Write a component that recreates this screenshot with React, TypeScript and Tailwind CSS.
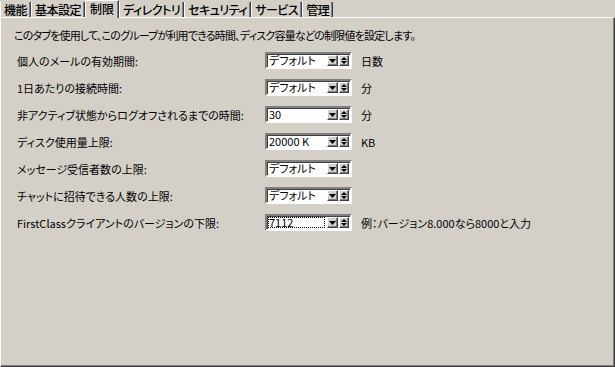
import React from 'react';

const TABS = [
  { label: '機能' },
  { label: '基本設定' },
  { label: '制限', active: true },
  { label: 'ディレクトリ' },
  { label: 'セキュリティ' },
  { label: 'サービス' },
  { label: '管理' },
];

const ROWS = [
  { label: '個人のメールの有効期間:', value: 'デフォルト', unit: '日数' },
  { label: '1日あたりの接続時間:', value: 'デフォルト', unit: '分' },
  { label: '非アクティブ状態からログオフされるまでの時間:', value: '30', unit: '分' },
  { label: 'ディスク使用量上限:', value: '20000 K', unit: 'KB' },
  { label: 'メッセージ受信者数の上限:', value: 'デフォルト', unit: '' },
  { label: 'チャットに招待できる人数の上限:', value: 'デフォルト', unit: '' },
  { label: 'FirstClassクライアントのバージョンの下限:', value: '7112', unit: '例：バージョン8.000なら8000と入力', focused: true },
];

function Combo({ value, focused }: { value: string; focused?: boolean }) {
  return (
    <div className="flex h-[17px] w-[87px] border-2 border-t-[#808080] border-l-[#808080] border-b-white border-r-white bg-white shadow-[inset_1px_1px_#404040]">
      <div className="flex-1 flex p-[1px] pr-[2px] min-w-0">
        <span
          className={
            'flex-1 flex items-center whitespace-nowrap leading-[13px] pl-[1px] ' +
            (focused ? 'outline outline-1 outline-dotted outline-black -outline-offset-1' : '')
          }
        >
          {value}
        </span>
      </div>
      {/* dropdown button */}
      <div className="my-[1px] w-[11px] bg-[#d4d0c8] border-t border-l border-white border-r border-b border-r-[#404040] border-b-[#404040] shadow-[inset_-1px_-1px_#808080] flex items-center justify-center">
        <svg width="7" height="4" viewBox="0 0 7 4">
          <path d="M0 0H7L3.5 4Z" fill="#000" />
        </svg>
      </div>
      {/* spin button */}
      <div className="ml-[1px] my-[1px] mr-[1px] w-[10px] bg-[#d4d0c8] border-t border-l border-white border-r border-b border-r-[#404040] border-b-[#404040] shadow-[inset_-1px_-1px_#808080] flex flex-col items-center justify-center gap-[1px]">
        <svg width="6" height="3" viewBox="0 0 6 3">
          <path d="M3 0L6 3H0Z" fill="#000" />
        </svg>
        <svg width="6" height="3" viewBox="0 0 6 3">
          <path d="M0 0H6L3 3Z" fill="#000" />
        </svg>
      </div>
    </div>
  );
}

export default function App() {
  return (
    <div className="w-[615px] h-[367px] bg-[#d4d0c8] text-black text-[11px] font-['Noto_Sans_CJK_JP','Noto_Sans',sans-serif] [font-feature-settings:'palt'] flex flex-col overflow-hidden">
      {/* Tabs */}
      <div className="flex items-end h-[17px] relative z-10">
        {TABS.map(t => (
          <div
            key={t.label}
            className={
              t.active
                ? 'h-[18px] -mb-[1px] px-[4px] whitespace-nowrap bg-[#d4d0c8] border-l border-t border-white border-r border-r-[#404040] shadow-[inset_-1px_0_#808080] flex items-center justify-center text-[12px] font-medium leading-[14px] pb-[2px]'
                : 'h-[15px] px-[3px] whitespace-nowrap border-l border-white border-r border-r-[#404040] shadow-[inset_-1px_0_#808080] flex items-center justify-center text-[12px] font-medium leading-[14px] tracking-[-0.5px]'
            }
          >
            {t.label}
          </div>
        ))}
      </div>

      {/* Panel */}
      <div className="flex-1 border-t border-l border-white border-r border-b border-r-[#404040] border-b-[#404040] shadow-[inset_-1px_-1px_#808080]">
        <p className="pl-[13px] pt-[11px] leading-[12px] whitespace-nowrap tracking-[-0.8px]">
          このタブを使用して、このグループが利用できる時間、ディスク容量などの制限値を設定します。
        </p>
        <div className="pl-[16px] pt-[11px] flex flex-col gap-[10px]">
          {ROWS.map(r => (
            <div key={r.label} className="flex items-center h-[17px]">
              <div className="w-[248px] leading-[12px] whitespace-nowrap">{r.label}</div>
              <Combo value={r.value} focused={r.focused} />
              <div className="ml-[9px] leading-[12px] whitespace-nowrap">{r.unit}</div>
            </div>
          ))}
        </div>
      </div>
    </div>
  );
}
